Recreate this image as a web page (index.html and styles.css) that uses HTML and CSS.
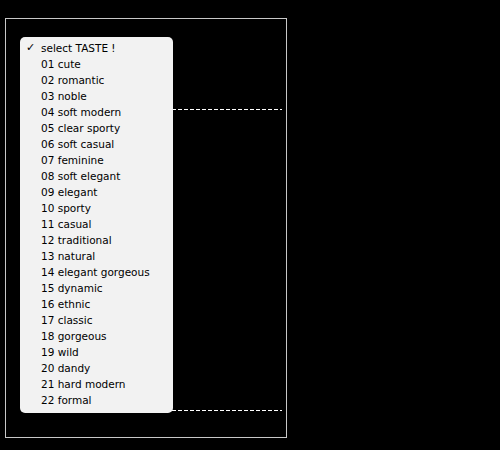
FILE: index.html
```html
<!DOCTYPE html>
<html>
<head>
  <title>select TASTE</title>
  <link rel="stylesheet" href="styles.css">
</head>
<body>
  <div class="stage">
    <div class="guide guide-top"></div>
    <div class="guide guide-bottom"></div>
    <ul class="menu">
      <li class="selected"><span class="check">✓</span>select TASTE !</li>
      <li><span class="check"></span>01 cute</li>
      <li><span class="check"></span>02 romantic</li>
      <li><span class="check"></span>03 noble</li>
      <li><span class="check"></span>04 soft modern</li>
      <li><span class="check"></span>05 clear sporty</li>
      <li><span class="check"></span>06 soft casual</li>
      <li><span class="check"></span>07 feminine</li>
      <li><span class="check"></span>08 soft elegant</li>
      <li><span class="check"></span>09 elegant</li>
      <li><span class="check"></span>10 sporty</li>
      <li><span class="check"></span>11 casual</li>
      <li><span class="check"></span>12 traditional</li>
      <li><span class="check"></span>13 natural</li>
      <li><span class="check"></span>14 elegant gorgeous</li>
      <li><span class="check"></span>15 dynamic</li>
      <li><span class="check"></span>16 ethnic</li>
      <li><span class="check"></span>17 classic</li>
      <li><span class="check"></span>18 gorgeous</li>
      <li><span class="check"></span>19 wild</li>
      <li><span class="check"></span>20 dandy</li>
      <li><span class="check"></span>21 hard modern</li>
      <li><span class="check"></span>22 formal</li>
    </ul>
  </div>
</body>
</html>
```

FILE: styles.css
```css
body {
  margin: 0;
  background: #000;
  font-family: 'DejaVu Sans', 'Noto Sans', sans-serif;
}
.stage {
  position: relative;
  box-sizing: border-box;
  width: 282px;
  height: 420px;
  margin: 18px 0 0 5px;
  padding: 18px 0 0 14px;
  border: 1px solid #c8c8c8;
}
.guide {
  position: absolute;
  left: 166px;
  width: 110px;
  height: 1px;
  background: repeating-linear-gradient(to right, #fff 0 4px, transparent 4px 6px);
}
.guide-top {
  top: 90px;
}
.guide-bottom {
  top: 391px;
}
.menu {
  position: relative;
  width: 153px;
  margin: 0;
  padding: 3px 0 5px;
  list-style: none;
  background: #f2f2f2;
  border-radius: 5px;
}
.menu li {
  display: flex;
  height: 16px;
  line-height: 16px;
  font-size: 10.5px;
  color: #000;
  white-space: nowrap;
}
.check {
  width: 21px;
  padding-left: 6px;
  box-sizing: border-box;
  font-size: 11px;
  font-weight: bold;
}
```
